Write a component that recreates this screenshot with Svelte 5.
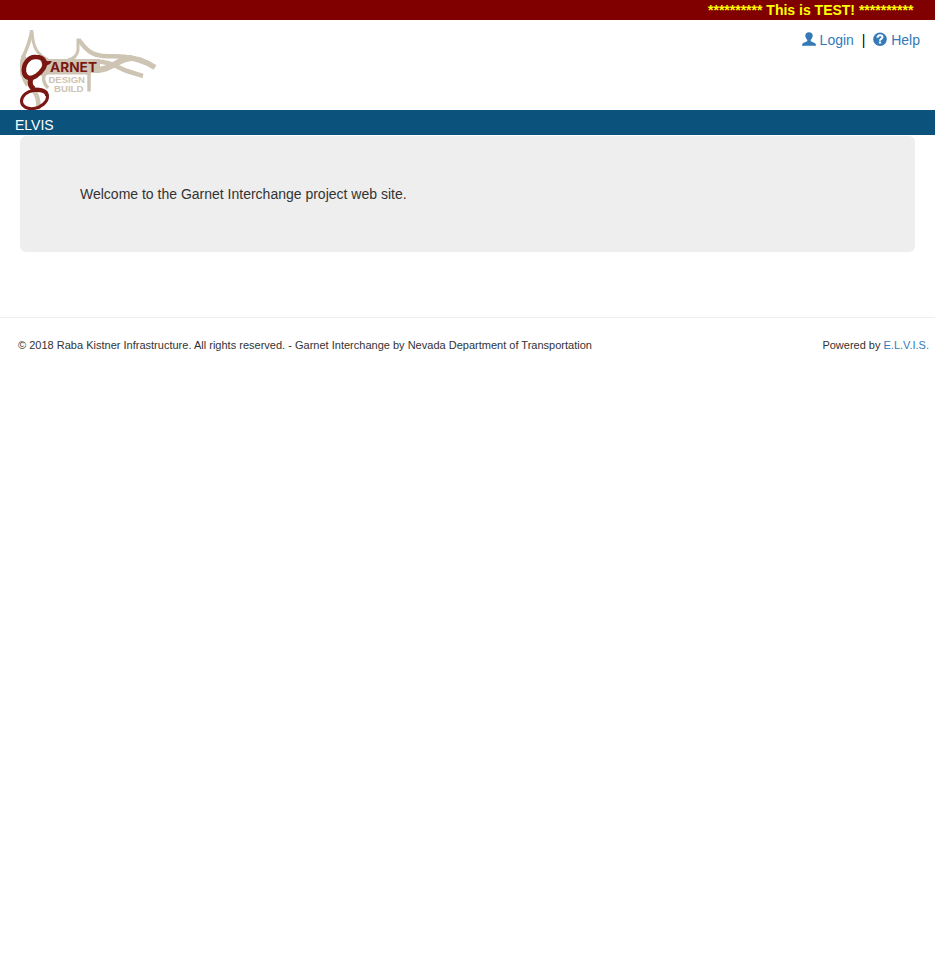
<script>
  const stars = '*'.repeat(10);
</script>

<div class="test-banner">{stars} This is TEST! {stars}</div>

<header>
  <svg class="logo" width="138" height="80" viewBox="0 0 138 80" role="img" aria-label="Garnet Design Build">
    <g fill="none" stroke="#cec4b4">
      <path stroke-width="3.500" d="M11.800 0C10 12 7 18 4 25C1 32 1 39 2.500 46" />
      <path stroke-width="3" d="M12 2C13 16 16 24 28 30" />
      <path stroke-width="5" d="M4 26C1 37 2 46 8 55" />
      <path stroke-width="4.500" d="M8 52C15 61 20 69 18 79" />
      <path stroke-width="3.500" d="M24 45C23 49 24 54 28 58" />
      <path stroke-width="3" d="M58 8.500V20Q57 28 48 30" />
      <path stroke-width="4.500" d="M58.500 9.500C67 21 72 25 83 26C96 27 103 25 114 29" />
      <path stroke-width="5.500" d="M104 27.500C116 27.500 125 31 135 37.500" />
      <path stroke-width="6" d="M74 40C92 41 96 29 112 28" />
      <path stroke-width="4.500" d="M74 31.500C92 31 98 38 107 41C114 43 119 45 123 46" />
      <path stroke-width="3.500" d="M69 42V61.500" />
    </g>
    <path fill="#cec4b4" d="M18 29H80V43H70.500V46Q68 44.500 65 44.500H29Q25 44.500 25 48L15 42Z" />
    <ellipse cx="13" cy="37" rx="9" ry="11" fill="#fff" />
    <g fill="none" stroke="#7b1713">
      <path stroke-width="4.500" d="M16 27C9 26 3 34 4 42C4.800 48 10 49.500 16 46C22 42 26 36 24.500 31.500C23.300 28.500 20 27 16 27Z" />
      <path stroke-width="5" d="M11 48C9.500 53 10.500 57 14 59" />
      <path stroke-width="3" d="M14 60.500C7 61 1.300 66 1.500 71.500C1.800 77 8 79.300 14 78.500C21 77.500 27.500 72 27.500 67C27.500 62 22 60 14 60.500Z" />
      <path stroke-width="3.800" d="M11 59.500C20 59 27 60 27 66" />
      <path stroke-width="4" d="M4 38C3 45 7 48.500 12 48" />
    </g>
    <path fill="#7b1713" d="M20 26L26 31L32 31L30 34Q26 35 24 40Z" />
    <text class="garnet" x="30" y="41.900" textLength="47" lengthAdjust="spacingAndGlyphs">ARNET</text>
    <text class="design" x="28.500" y="53" textLength="36.500" lengthAdjust="spacingAndGlyphs">DESIGN</text>
    <text class="build" x="34" y="61.700" textLength="29.500" lengthAdjust="spacingAndGlyphs">BUILD</text>
  </svg>
  <nav>
    <a href="#login"><svg class="icon" viewBox="0 0 14 14"><path d="M7 .2C4.600.2 3.300 1.500 3.300 3.600C3.300 5.500 4.300 7 5.300 8V9.100C5 9.900 1.200 10.700.5 11.700C.1 12.200 0 12.800 0 13.700H14C14 12.800 13.900 12.200 13.500 11.700C12.800 10.700 9 9.900 8.700 9.100V8C9.700 7 10.700 5.500 10.700 3.600C10.700 1.500 9.400.2 7 .2Z" /></svg> Login</a>
    <span class="divider">|</span>
    <a href="#help"><svg class="icon" viewBox="0 0 14 14"><circle cx="7" cy="7.200" r="6.800" /><path class="mark" d="M4.500 5.700C4.500 2.500 9.500 2.400 9.500 5.200C9.500 7 7 6.900 7 8.700" /><rect x="5.900" y="9.500" width="2.200" height="2" fill="#fff" /></svg> Help</a>
  </nav>
</header>

<div class="title-bar">ELVIS</div>

<main><p>Welcome to the Garnet Interchange project web site.</p></main>

<footer>
  <span class="copyright">© 2018 Raba Kistner Infrastructure. All rights reserved. - Garnet Interchange by Nevada Department of Transportation</span>
  <span>Powered by <a href="#elvis">E.L.V.I.S.</a></span>
</footer>

<style>
  :global(body) {
    margin: 0;
    background: #fff;
    color: #333;
    font: 14px/20px "Liberation Sans", Arial, sans-serif;
  }
  a { color: #337ab7; text-decoration: none; }
  .test-banner {
    height: 20px;
    padding-right: 21.6px;
    background: maroon;
    color: #ff0;
    font-weight: bold;
    text-align: right;
  }
  header {
    display: flex;
    justify-content: space-between;
    height: 80px;
    padding: 10px 15px 0 20px;
  }
  .logo { display: block; overflow: hidden; }
  .garnet { font: bold 13.2px Inter, sans-serif; fill: #7b1713; }
  .design { font: bold 8.8px "Liberation Sans", sans-serif; fill: #cec4b4; }
  .build { font: bold 8.4px "Liberation Sans", sans-serif; fill: #cec4b4; }
  nav { color: #000; white-space: nowrap; }
  .icon { width: 14px; height: 14px; vertical-align: -1px; fill: #337ab7; }
  .mark { fill: none; stroke: #fff; stroke-width: 2; }
  .divider { margin: 0 4px; }
  .title-bar {
    box-sizing: border-box;
    height: 25px;
    padding: 5px 15px 0;
    background: #0b527c;
    color: #fff;
  }
  main {
    margin: 1px 20px 0;
    padding: 48px 60px;
    border-radius: 6px;
    background: #eee;
  }
  main p { margin: 0; line-height: 20px; }
  footer {
    display: flex;
    justify-content: space-between;
    margin-top: 65px;
    padding: 17px 6px 0 18px;
    border-top: 1px solid #eee;
    font-size: 11px;
  }
  .copyright { letter-spacing: .008px; }
</style>
